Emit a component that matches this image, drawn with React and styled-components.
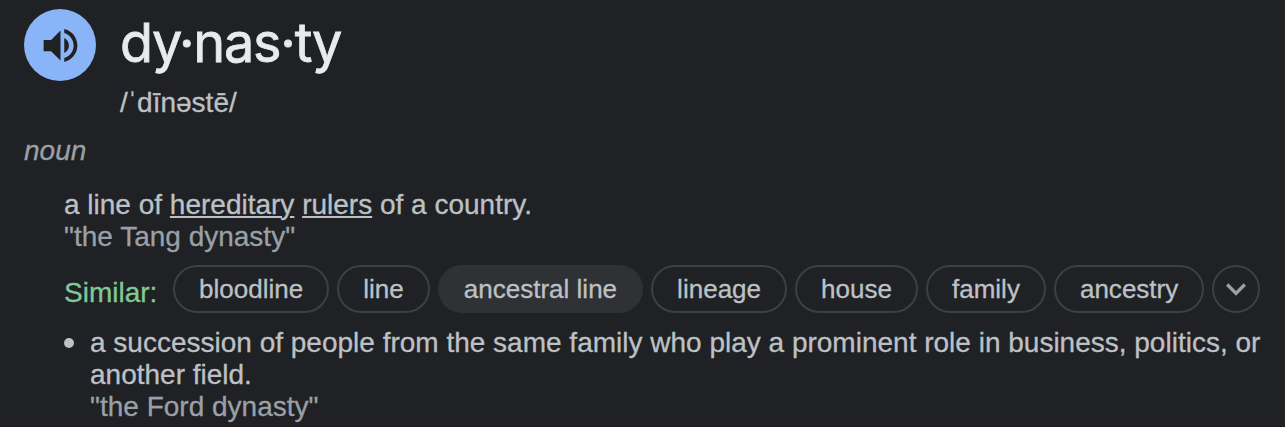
import React from "react";
import styled, { createGlobalStyle } from "styled-components";

const GlobalStyle = createGlobalStyle`
  * { box-sizing: border-box; }
  body {
    margin: 0;
    background: #202124;
    font-family: "Liberation Sans", Arial, sans-serif;
    overflow: hidden;
  }
`;

const Card = styled.main`
  width: 1285px;
  height: 427px;
  padding: 9px 0 0 24px;
  border-bottom: 1px solid #1e191f;
  background: #202124;
  color: #bdc1c6;
  font-size: 28px;
  line-height: 32px;
  white-space: nowrap;
  overflow: hidden;
  -webkit-text-stroke: 0.3px currentColor;
`;

const Header = styled.header`
  display: flex;
  gap: 24px;
  height: 126px;
`;

const AudioButton = styled.button`
  display: flex;
  align-items: center;
  justify-content: center;
  width: 72px;
  height: 72px;
  padding: 0;
  border: 0;
  border-radius: 50%;
  background: #8ab4f8;
  color: #202124;
`;

const Headword = styled.h1`
  margin: 0;
  height: 78px;
  font: 400 54px/68px Inter, sans-serif;
  letter-spacing: -1.25px;
  color: #e8eaed;
  -webkit-text-stroke: 0.8px #e8eaed;
`;

const Phonetic = styled.div`
  color: #bdc1c6;
`;

const PartOfSpeech = styled.div`
  color: #9aa0a6;
  font-style: italic;
`;

const Sense = styled.section`
  padding: 22px 0 0 40px;
`;

const Example = styled.div`
  color: #9aa0a6;
`;

const Term = styled.a`
  text-decoration: underline;
  text-decoration-thickness: 2px;
  text-underline-offset: 2px;
`;

const SimilarRow = styled.div`
  display: flex;
  gap: 8px;
  margin-top: 12px;
  height: 48px;
`;

const SimilarLabel = styled.span`
  width: 101px;
  padding-top: 12px;
  color: #81c995;
`;

const Chip = styled.button`
  height: 48px;
  padding: 0 24px;
  border: 2px solid ${(p) => (p.$active ? "#303134" : "#3c4043")};
  border-radius: 24px;
  background: ${(p) => (p.$active ? "#303134" : "transparent")};
  color: #bdc1c6;
  font: 26px/44px "Liberation Sans", Arial, sans-serif;
  letter-spacing: 0.012px;
  -webkit-text-stroke: 0.3px currentColor;
`;

const MoreButton = styled(Chip)`
  display: flex;
  align-items: center;
  justify-content: center;
  width: 48px;
  padding: 0;
  color: #9aa0a6;
`;

const SubSense = styled.div`
  display: flex;
  margin-top: 14px;
`;

const Bullet = styled.span`
  width: 10px;
  height: 10px;
  margin: 11px 16px 0 0;
  border-radius: 50%;
  background: #bdc1c6;
`;

const synonyms = ["bloodline", "line", "ancestral line", "lineage", "house", "family", "ancestry"];

export default function App() {
  return (
    <>
      <GlobalStyle />
      <Card>
        <Header>
          <AudioButton aria-label="Listen">
            <svg width="45" height="45" viewBox="0 0 24 24" fill="currentColor">
              <path d="M3 9v6h4l5 5V4L7 9H3zm13.5 3c0-1.77-1.02-3.29-2.5-4.03v8.05c1.48-.73 2.5-2.25 2.5-4.02zM14 3.23v2.06c2.89.86 5 3.54 5 6.71s-2.11 5.85-5 6.71v2.06c4.01-.91 7-4.49 7-8.77s-2.99-7.86-7-8.77z" />
            </svg>
          </AudioButton>
          <div>
            <Headword>dy·nas·ty</Headword>
            <Phonetic>/ˈdīnəstē/</Phonetic>
          </div>
        </Header>
        <PartOfSpeech>noun</PartOfSpeech>
        <Sense>
          <div>
            a line of <Term>hereditary</Term> <Term>rulers</Term> of a country.
          </div>
          <Example>"the Tang dynasty"</Example>
          <SimilarRow>
            <SimilarLabel>Similar:</SimilarLabel>
            {synonyms.map((word) => (
              <Chip key={word} $active={word === "ancestral line"}>{word}</Chip>
            ))}
            <MoreButton aria-label="More">
              <svg width="40" height="40" viewBox="0 0 24 24" fill="currentColor">
                <path d="M16.59 8.59 12 13.17 7.41 8.59 6 10l6 6 6-6z" />
              </svg>
            </MoreButton>
          </SimilarRow>
          <SubSense>
            <Bullet />
            <div>
              a succession of people from the same family who play a prominent role in business, politics, or
              <br />
              another field.
              <Example>"the Ford dynasty"</Example>
            </div>
          </SubSense>
        </Sense>
      </Card>
    </>
  );
}
